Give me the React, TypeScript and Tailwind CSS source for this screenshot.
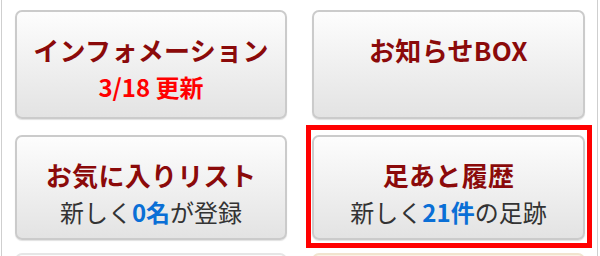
const font = {
  fontFamily: '"Noto Sans CJK JP", "Noto Sans", sans-serif',
};

function MenuCard({
  title,
  sub,
  className,
}: {
  title: string;
  sub?: React.ReactNode;
  className: string;
}) {
  return (
    <div
      className={
        "rounded-[7px] border-2 border-[#cbcbcb] bg-linear-to-b from-[#fdfdfd] to-[#e3e3e3] shadow-[0_1px_1px_rgba(0,0,0,0.12)] flex flex-col items-center pt-[22px] " +
        className
      }
    >
      <div className="text-[26px] leading-[32px] font-bold tracking-[0.3px] text-[#8b0a0a] whitespace-nowrap">
        {title}
      </div>
      {sub && (
        <div className="mt-[1px] text-[24px] leading-[40px] text-[#333] whitespace-nowrap">
          {sub}
        </div>
      )}
    </div>
  );
}

export default function App() {
  return (
    <div className="w-[600px] h-[256px] overflow-hidden bg-white" style={font}>
      <div className="ml-px w-[597px] h-full border-x border-[#cfcfcf] bg-white">
        {/* row 1 */}
        <div className="flex h-[125px]">
          <div className="w-[298px] pl-[13px] pt-[10px]">
            <MenuCard
              className="w-[272px] h-[109px]"
              title="インフォメーション"
              sub={<span className="font-bold text-[#ff0000]">3/18 更新</span>}
            />
          </div>
          <div className="w-[297px] pl-[12px] pt-[10px]">
            <MenuCard className="w-[273px] h-[109px]" title="お知らせBOX" />
          </div>
        </div>
        {/* row 2 */}
        <div className="flex h-[128px]">
          <div className="w-[298px] pl-[13px] pt-[10px]">
            <MenuCard
              className="w-[272px] h-[105px]"
              title="お気に入りリスト"
              sub={
                <>
                  新しく<span className="font-bold text-[#0a6fd6]">0名</span>が登録
                </>
              }
            />
          </div>
          <div className="w-[297px] pl-[6px]">
            <div className="w-[286px] h-[123px] border-[5px] border-[#ff0000] pl-px pt-[5px]">
              <MenuCard
                className="w-[273px] h-[105px]"
                title="足あと履歴"
                sub={
                  <>
                    新しく<span className="font-bold text-[#0a6fd6]">21件</span>の足跡
                  </>
                }
              />
            </div>
          </div>
        </div>
        {/* row 3 peek */}
        <div className="flex">
          <div className="w-[298px] pl-[13px]">
            <div className="w-[272px] h-[20px] rounded-t-[7px] border-t-2 border-x-2 border-[#e6e6e6] bg-[#fcfcfc]" />
          </div>
          <div className="w-[297px] pl-[12px]">
            <div className="w-[273px] h-[20px] rounded-t-[7px] border-t-2 border-x-2 border-[#f1e4cf] bg-[#fbf3e6]" />
          </div>
        </div>
      </div>
    </div>
  );
}
